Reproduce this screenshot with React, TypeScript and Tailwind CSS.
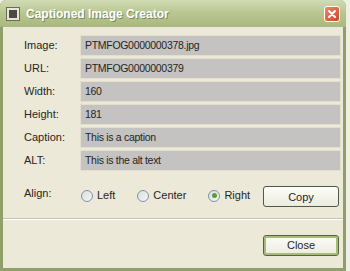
import { useState } from 'react'

const fields = [
  { label: 'Image:', value: 'PTMFOG0000000378.jpg' },
  { label: 'URL:', value: 'PTMFOG0000000379' },
  { label: 'Width:', value: '160' },
  { label: 'Height:', value: '181' },
  { label: 'Caption:', value: 'This is a caption' },
  { label: 'ALT:', value: 'This is the alt text' },
]

function Radio({ label, checked, onClick }: { label: string; checked: boolean; onClick: () => void }) {
  return (
    <button onClick={onClick} className="flex items-center gap-[4px] text-[11px] text-[#26261f]">
      <span className="w-[12px] h-[12px] rounded-full border border-[#7d93a8] bg-gradient-to-br from-[#d9dde0] to-[#f7f7f2] flex items-center justify-center">
        {checked && <span className="w-[5px] h-[5px] rounded-full bg-[#5c9a3c]" />}
      </span>
      {label}
    </button>
  )
}

function XpButton({ children, primary }: { children: string; primary?: boolean }) {
  return (
    <button
      className={`w-[76px] h-[21px] rounded-[3px] border text-[11px] text-[#26261f] bg-gradient-to-b from-[#fdfdf8] to-[#ecebdf] ${
        primary ? 'border-[#55663b] shadow-[inset_0_0_0_2px_#a7bc7a]' : 'border-[#4f5a44]'
      }`}
    >
      {children}
    </button>
  )
}

export default function App() {
  const [align, setAlign] = useState('Right')

  return (
    <div className="w-[350px] h-[271px] bg-[#eef0e4] font-['Liberation_Sans',Arial,sans-serif]">
      <div className="w-[346px] h-[271px] flex flex-col bg-[#8fa06d] rounded-t-[6px] overflow-hidden">
        {/* Title bar */}
        <div className="h-[27px] shrink-0 flex items-center px-[6px] bg-gradient-to-b from-[#d2dbb4] via-[#b7c58f] to-[#a9b87f]">
          <span className="w-[14px] h-[14px] bg-[#e9e6d8] border border-[#6d6a5c] flex items-center justify-center">
            <span className="w-[8px] h-[8px] bg-[#4c4a44]" />
          </span>
          <span className="ml-[6px] text-[12px] font-bold text-white [text-shadow:1px_1px_0_#7d8b5a]">
            Captioned Image Creator
          </span>
          <span className="ml-auto w-[16px] h-[16px] rounded-[3px] border border-white bg-gradient-to-br from-[#e98a6a] to-[#c9452a] flex items-center justify-center">
            <svg width="10" height="10" viewBox="0 0 10 10">
              <path d="M2 2L8 8M8 2L2 8" stroke="white" strokeWidth="2" strokeLinecap="round" />
            </svg>
          </span>
        </div>

        {/* Body */}
        <div className="flex-1 mx-[3px] mb-[3px] bg-[#ece9d8] flex flex-col">
          <div className="pl-[21px] pr-[2px] pt-[8px] flex flex-col gap-[2px]">
            {fields.map(f => (
              <div key={f.label} className="flex items-center h-[21px]">
                <span className="w-[56px] text-[11px] text-[#26261f]">{f.label}</span>
                <div className="flex-1 h-[21px] bg-[#c4c3c1] border border-[#e2e0cc] flex items-center px-[4px] text-[10.5px] tracking-[-0.3px] text-[#26261f]">
                  {f.value}
                </div>
              </div>
            ))}
          </div>

          <div className="pl-[21px] pr-[4px] mt-[14px] flex items-center h-[21px]">
            <span className="w-[57px] text-[11px] text-[#26261f] -mt-[5px]">Align:</span>
            <div className="flex items-center gap-[22px]">
              {['Left', 'Center', 'Right'].map(a => (
                <Radio key={a} label={a} checked={align === a} onClick={() => setAlign(a)} />
              ))}
            </div>
            <div className="ml-auto">
              <XpButton>Copy</XpButton>
            </div>
          </div>

          <div className="mt-[12px] h-[2px] border-t border-[#c6c3b2] border-b border-b-white" />

          <div className="mt-[15px] pr-[4px] flex justify-end">
            <XpButton primary>Close</XpButton>
          </div>
        </div>
      </div>
    </div>
  )
}
